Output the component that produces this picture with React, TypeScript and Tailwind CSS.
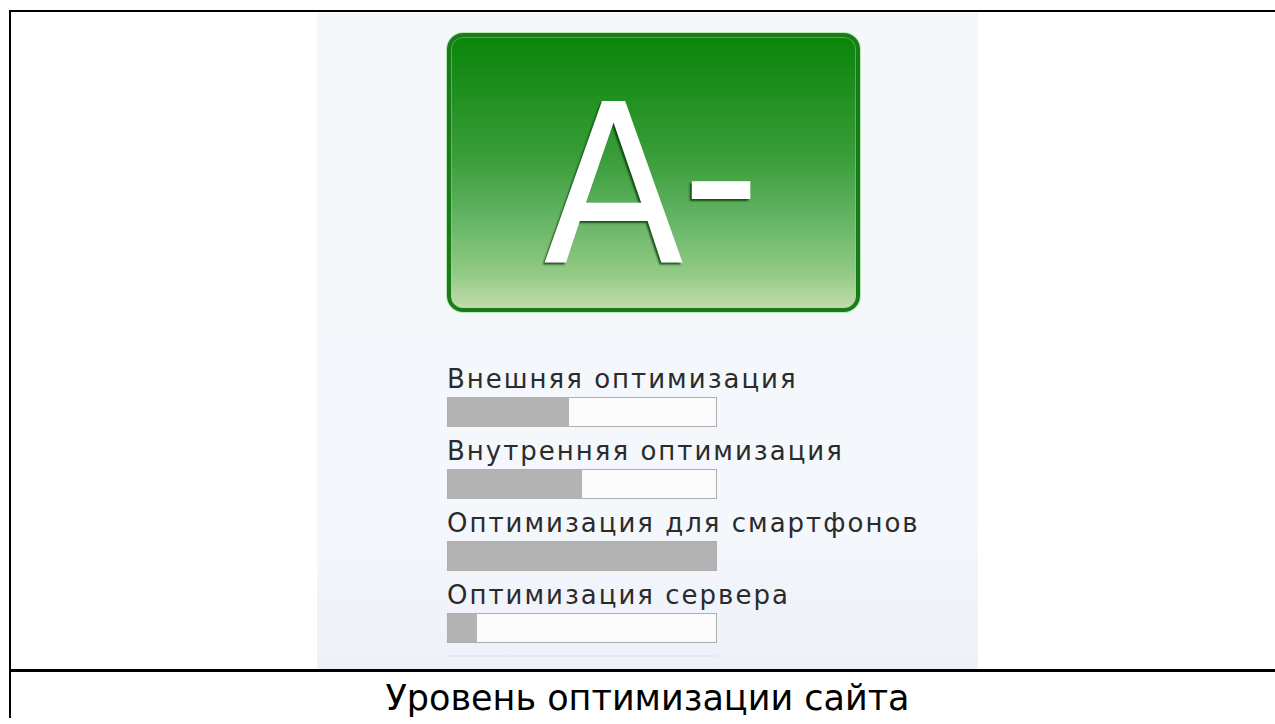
import React from "react";

type Meter = { label: string; value: number };

const meters: Meter[] = [
  { label: "Внешняя оптимизация", value: 45 },
  { label: "Внутренняя оптимизация", value: 50 },
  { label: "Оптимизация для смартфонов", value: 100 },
  { label: "Оптимизация сервера", value: 11 },
];

function GradeBadge() {
  return (
    <div className="flex h-[279px] w-[413px] items-center justify-center rounded-[16px] border-[4px] border-[#1b7b1b] bg-[linear-gradient(to_bottom,#0a860a_0%,#1f8f1f_20%,#3a9e3a_45%,#66b566_68%,#94cb86_88%,#c2dcae_100%)] pr-[8px] pt-[25px] shadow-[inset_0_0_0_1px_rgba(150,225,150,0.45),0_0_0_1px_rgba(130,225,130,0.55)]">
      <span className="font-['DejaVu_Sans',sans-serif] text-[222px] leading-none text-white [text-shadow:-2px_2px_2px_rgba(0,45,0,0.75)]">
        <span className="inline-block scale-x-[0.93] tracking-[-9px]">A</span>
        <span className="inline-block -translate-y-[11px]">-</span>
      </span>
    </div>
  );
}

function MeterRow({ label, value }: Meter) {
  return (
    <div className="flex flex-col">
      <div className="h-[36px] whitespace-nowrap font-['DejaVu_Sans',sans-serif] text-[26px] leading-[36px] tracking-[2px] text-[#2b2b2b]">
        {label}
      </div>
      <div className="h-[30px] w-[270px] border border-[#aeaeae] bg-[#fbfbfb]">
        <div className="h-full bg-[#b3b3b3]" style={{ width: `${value}%` }} />
      </div>
    </div>
  );
}

export default function App() {
  return (
    <div className="h-[724px] w-[1275px] overflow-hidden bg-white">
      <div className="ml-[9px] mt-[10px] w-[1277px] border-x-2 border-t-2 border-black">
        <div className="flex justify-center border-b-[3px] border-black">
          <div className="h-[657px] w-[661px] bg-[linear-gradient(to_bottom,#f6f7fb_0%,#f4f7fb_78%,#edf1f9_100%)] pl-[130px] pt-[21px]">
            <GradeBadge />
            <div className="mt-[49px] flex flex-col gap-[6px]">
              {meters.map((m) => (
                <MeterRow key={m.label} label={m.label} value={m.value} />
              ))}
            </div>
            <div className="mt-[12px] h-[2px] w-[270px] bg-[#e6e9f0]" />
          </div>
        </div>
        <div className="pt-[6px] text-center font-['DejaVu_Sans',sans-serif] text-[35px] leading-[40px] text-black">
          Уровень оптимизации сайта
        </div>
      </div>
    </div>
  );
}
